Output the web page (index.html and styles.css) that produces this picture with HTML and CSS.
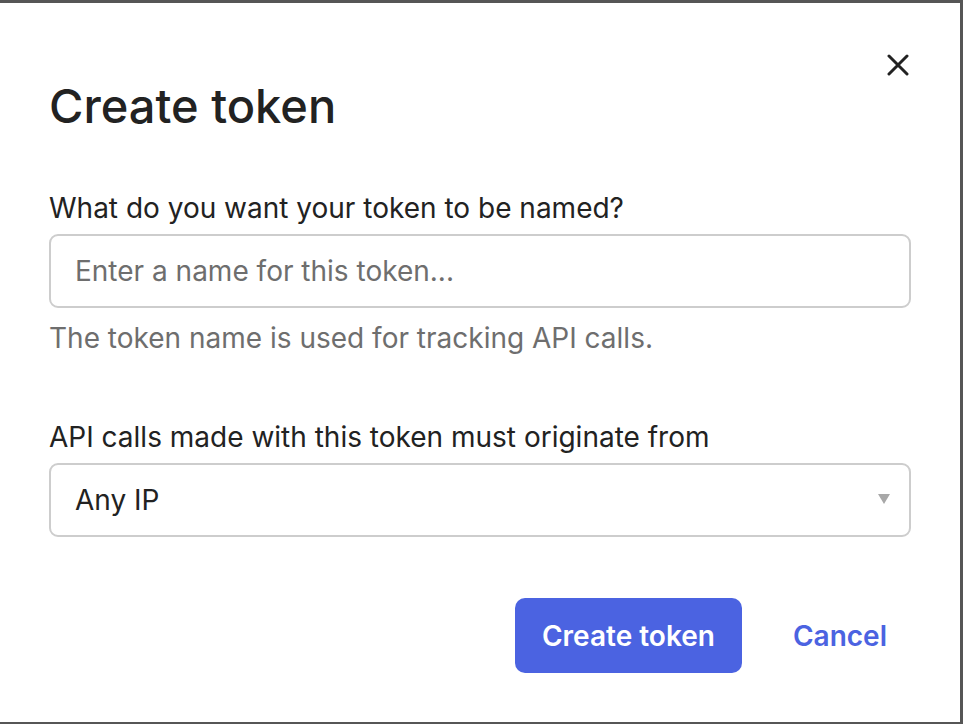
FILE: index.html
```html
<!DOCTYPE html>
<html lang="en">
<head>
<meta charset="utf-8">
<title>Create token</title>
<link rel="stylesheet" href="styles.css">
</head>
<body>
<div class="modal">
  <button class="close" aria-label="Close">
    <svg width="22" height="22" viewBox="0 0 22 22"><path d="M2 2 L20 20 M20 2 L2 20" stroke="#222" stroke-width="3" stroke-linecap="round"/></svg>
  </button>
  <h1 class="title">Create token</h1>
  <div class="field">
    <label class="label">What do you want your token to be named?</label>
    <div class="input"><span class="placeholder">Enter a name for this token...</span></div>
    <p class="help">The token name is used for tracking API calls.</p>
  </div>
  <div class="field second">
    <label class="label">API calls made with this token must originate from</label>
    <div class="input select"><span class="value">Any IP</span><span class="arrow"></span></div>
  </div>
  <div class="actions">
    <button class="primary">Create token</button>
    <button class="link">Cancel</button>
  </div>
</div>
</body>
</html>
```

FILE: styles.css
```css
html, body {
  margin: 0;
  padding: 0;
  background: #565656;
  height: 100%;
  overflow: hidden;
}
.modal {
  position: relative;
  margin-top: 3px;
  width: 960px;
  height: 719px;
  background: #fff;
  box-sizing: border-box;
  padding: 75px 49px 0 49px;
  font-family: Inter, "Noto Sans", sans-serif;
  color: #222;
}
.close {
  position: absolute;
  top: 51px;
  right: 51px;
  border: 0;
  background: none;
  padding: 0;
  width: 22px;
  height: 22px;
}
.close svg { display: block; }
.title {
  margin: 0;
  font-size: 47px;
  font-weight: 500;
  letter-spacing: 0;
  line-height: 56px;
  color: #222;
}
.field {
  margin-top: 58px;
}
.field.second {
  margin-top: 67px;
}
.label {
  display: block;
  font-size: 28px;
  line-height: 32px;
  color: #222;
}
.input {
  margin-top: 10px;
  height: 74px;
  border: 2px solid #cdcdcd;
  border-radius: 9px;
  box-sizing: border-box;
  display: flex;
  align-items: center;
  padding: 0 19px 0 24px;
  font-size: 28px;
}
.placeholder { color: #6e6e6e; }
.value { color: #222; flex: 1; }
.arrow {
  width: 0;
  height: 0;
  border-left: 6px solid transparent;
  border-right: 6px solid transparent;
  border-top: 10px solid #a8a8a8;
  margin-top: -3px;
}
.help {
  margin: 14px 0 0;
  font-size: 28px;
  line-height: 32px;
  color: #6e6e6e;
}
.actions {
  margin-top: 61px;
  display: flex;
  justify-content: flex-end;
  align-items: center;
  gap: 51px;
  padding-right: 24px;
}
.primary {
  height: 75px;
  width: 227px;
  border: 0;
  border-radius: 10px;
  background: #4b63e1;
  color: #fff;
  font-family: Inter, "Noto Sans", sans-serif;
  font-size: 28px;
  font-weight: 600;
  padding: 0;
}
.link {
  border: 0;
  background: none;
  padding: 0;
  color: #4b63e1;
  font-family: Inter, "Noto Sans", sans-serif;
  font-size: 28px;
  font-weight: 600;
}
```
